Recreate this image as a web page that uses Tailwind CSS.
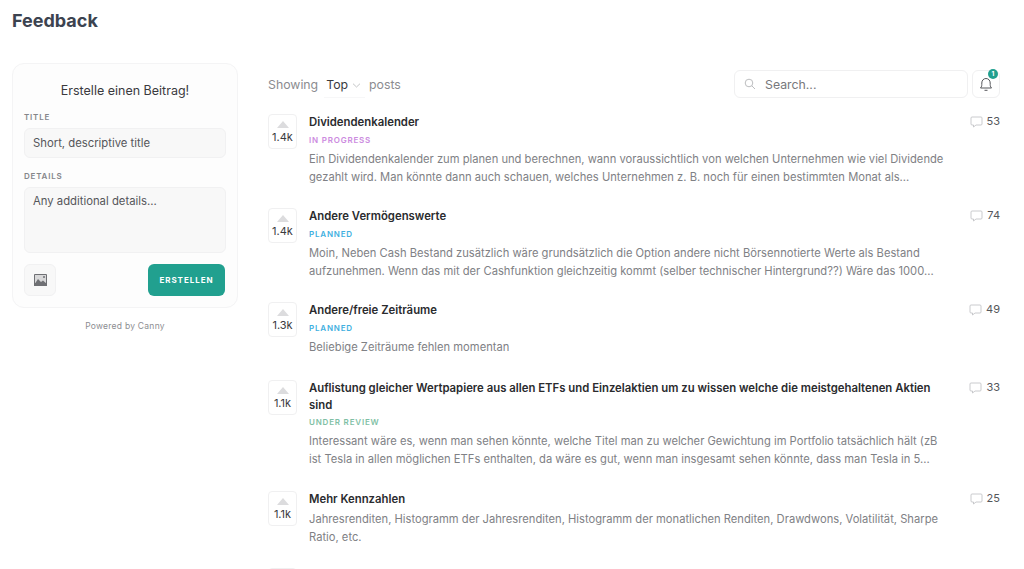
<!DOCTYPE html>
<html lang="en">
<head>
    <meta charset="UTF-8">
    <meta name="viewport" content="width=device-width, initial-scale=1.0">
    <title>Feedback</title>
    <script src="https://cdn.jsdelivr.net/npm/@tailwindcss/browser@4"></script>
</head>
<body class="bg-white h-[569px] overflow-hidden font-['Inter',sans-serif] text-[#2f3136]">
    <header class="px-3 pt-[9px] h-[63px]">
        <h1 class="text-[18px] leading-6 font-bold text-[#3c4350]">Feedback</h1>
    </header>

    <main class="flex items-start px-3 pr-6">
        <!-- sidebar -->
        <aside class="w-[226px] shrink-0">
            <form class="bg-[#fdfdfd] border border-[#f4f4f5] rounded-xl h-[245px] px-[11px] pt-[18px]">
                <h2 class="text-center text-[12.5px] leading-[17px] text-[#3a3a3e]">Erstelle einen Beitrag!</h2>
                <label class="block mt-[13px] text-[8px] leading-[10px] font-semibold tracking-[0.1em] text-[#85868a]">TITLE</label>
                <div class="mt-[6px] h-[30px] bg-[#f8f8f8] border border-[#f1f1f2] rounded-md px-[8px] text-[11.3px] leading-[28px] text-[#55565a]">Short, descriptive title</div>
                <label class="block mt-[13px] text-[8px] leading-[10px] font-semibold tracking-[0.1em] text-[#85868a]">DETAILS</label>
                <div class="mt-[6px] h-[66px] bg-[#f8f8f8] border border-[#f1f1f2] rounded-md px-[8px] pt-[3px] text-[11.3px] leading-[20px] text-[#55565a]">Any additional details...</div>
                <div class="flex justify-between mt-[11px]">
                    <div class="w-[32px] h-[32px] bg-[#f8f8f8] border border-[#f1f1f2] rounded-md flex items-center justify-center">
                        <svg width="13" height="12" viewBox="0 0 13 12"><rect width="13" height="12" rx="1" fill="#6f7074"/><rect x="1" y="1" width="11" height="8" fill="#d8d8d9"/><path d="M0 11 L4 5 L7 8 L9 6.5 L13 10 V12 H0 Z" fill="#6f7074"/><circle cx="10" cy="3" r="1" fill="#6f7074"/></svg>
                    </div>
                    <button type="button" class="mr-px w-[77px] h-[32px] bg-[#21a08f] rounded-md text-white text-[8px] font-bold tracking-[0.12em]">ERSTELLEN</button>
                </div>
            </form>
            <p class="mt-[12px] text-center text-[8.5px] leading-3 tracking-[0.03em] text-[#8c8d91]">Powered by Canny</p>
        </aside>

        <!-- posts -->
        <section class="ml-[30px] flex-1 min-w-0">
            <div class="flex items-center h-[28px] mt-[7px] text-[12.3px]">
                <span class="pt-[2px] text-[#8b8c90]">Showing</span>
                <div class="flex items-center h-[28px] ml-[6px] pl-[2px] pr-[4px] pt-[3px] border-b border-[#f7f7f8]">
                    <span class="text-[#3a3a3e]">Top</span>
                    <svg class="ml-[4px]" width="9" height="5" viewBox="0 0 9 5" fill="none"><path d="M1 0.7 L4.5 4 L8 0.7" stroke="#b5b6b9" stroke-width="0.8"/></svg>
                </div>
                <span class="ml-[4px] pt-[2px] text-[#8b8c90]">posts</span>
                <div class="ml-auto w-[234px] h-[28px] border border-[#f0f0f1] rounded-md flex items-center px-[9px]">
                    <svg width="12" height="12" viewBox="0 0 12 12" fill="none" stroke="#b4b5b8" stroke-width="0.9"><circle cx="5" cy="5" r="3.8"/><path d="M7.8 7.8 L11 11"/></svg>
                    <span class="ml-[9px] pt-[2px] text-[#77787c]">Search...</span>
                </div>
                <div class="relative ml-[4px] w-[28px] h-[28px] border border-[#f0f0f1] rounded-md flex items-center justify-center">
                    <svg width="14" height="15" viewBox="0 0 14 15" fill="none" stroke="#55565a" stroke-width="1"><path d="M1.5 11 C3 9.5 2.8 8 2.8 6 C2.8 3.4 4.6 1.5 7 1.5 C9.4 1.5 11.2 3.4 11.2 6 C11.2 8 11 9.5 12.5 11 Z"/><path d="M5.5 13.3 H8.5"/></svg>
                    <span class="absolute top-[-2px] right-[1px] w-[10px] h-[10px] rounded-full bg-[#21a08f] text-white text-[6.5px] leading-[10px] font-bold text-center">1</span>
                </div>
            </div>

            <div id="posts" class="mt-[16px]">
                <article class="flex items-start pb-[22px]">
                    <div class="w-[29px] h-[35px] shrink-0 border border-[#f0f0f1] rounded-[4px] flex flex-col items-center pt-[6px]">
                        <span class="w-0 h-0 border-x-[6px] border-x-transparent border-b-[7px] border-b-[#dcdcde]"></span>
                        <span class="mt-[3px] text-[11px] leading-[13px] text-[#3a3a3e]">1.4k</span>
                    </div>
                    <div class="ml-[12px] flex-1 min-w-0 pr-[24px]">
                        <h3 class="text-[11.35px] leading-[17px] font-semibold text-[#2a2b2e]">Dividendenkalender</h3>
                        <div class="mt-[4px] text-[8px] leading-[10px] font-semibold tracking-[0.1em] text-[#cc8be0]">IN PROGRESS</div>
                        <p class="mt-[6px] text-[11.2px] leading-[17.5px] text-[#808185]">Ein Dividendenkalender zum planen und berechnen, wann voraussichtlich von welchen Unternehmen wie viel Dividende gezahlt wird. Man könnte dann auch schauen, welches Unternehmen z. B. noch für einen bestimmten Monat als...</p>
                    </div>
                    <div class="flex items-center h-[15px] text-[11px] text-[#55565a]">
                        <svg width="13" height="12" viewBox="0 0 13 12" fill="none" stroke="#bdbec1" stroke-width="0.8"><path d="M2 1 H11 Q12 1 12 2 V8 Q12 9 11 9 H6 L3.5 11 V9 H2 Q1 9 1 8 V2 Q1 1 2 1 Z"/></svg>
                        <span class="ml-[4px]">53</span>
                    </div>
                </article>
                <article class="flex items-start pb-[22px]">
                    <div class="w-[29px] h-[35px] shrink-0 border border-[#f0f0f1] rounded-[4px] flex flex-col items-center pt-[6px]">
                        <span class="w-0 h-0 border-x-[6px] border-x-transparent border-b-[7px] border-b-[#dcdcde]"></span>
                        <span class="mt-[3px] text-[11px] leading-[13px] text-[#3a3a3e]">1.4k</span>
                    </div>
                    <div class="ml-[12px] flex-1 min-w-0 pr-[24px]">
                        <h3 class="text-[11.35px] leading-[17px] font-semibold text-[#2a2b2e]">Andere Vermögenswerte</h3>
                        <div class="mt-[4px] text-[8px] leading-[10px] font-semibold tracking-[0.1em] text-[#3fb0e0]">PLANNED</div>
                        <p class="mt-[6px] text-[11.2px] leading-[17.5px] text-[#808185]">Moin, Neben Cash Bestand zusätzlich wäre grundsätzlich die Option andere nicht Börsennotierte Werte als Bestand aufzunehmen. Wenn das mit der Cashfunktion gleichzeitig kommt (selber technischer Hintergrund??) Wäre das 1000...</p>
                    </div>
                    <div class="flex items-center h-[15px] text-[11px] text-[#55565a]">
                        <svg width="13" height="12" viewBox="0 0 13 12" fill="none" stroke="#bdbec1" stroke-width="0.8"><path d="M2 1 H11 Q12 1 12 2 V8 Q12 9 11 9 H6 L3.5 11 V9 H2 Q1 9 1 8 V2 Q1 1 2 1 Z"/></svg>
                        <span class="ml-[4px]">74</span>
                    </div>
                </article>
                <article class="flex items-start pb-[23.5px]">
                    <div class="w-[29px] h-[35px] shrink-0 border border-[#f0f0f1] rounded-[4px] flex flex-col items-center pt-[6px]">
                        <span class="w-0 h-0 border-x-[6px] border-x-transparent border-b-[7px] border-b-[#dcdcde]"></span>
                        <span class="mt-[3px] text-[11px] leading-[13px] text-[#3a3a3e]">1.3k</span>
                    </div>
                    <div class="ml-[12px] flex-1 min-w-0 pr-[24px]">
                        <h3 class="text-[11.35px] leading-[17px] font-semibold text-[#2a2b2e]">Andere/freie Zeiträume</h3>
                        <div class="mt-[4px] text-[8px] leading-[10px] font-semibold tracking-[0.1em] text-[#3fb0e0]">PLANNED</div>
                        <p class="mt-[6px] text-[11.2px] leading-[17.5px] text-[#808185]">Beliebige Zeiträume fehlen momentan</p>
                    </div>
                    <div class="flex items-center h-[15px] text-[11px] text-[#55565a]">
                        <svg width="13" height="12" viewBox="0 0 13 12" fill="none" stroke="#bdbec1" stroke-width="0.8"><path d="M2 1 H11 Q12 1 12 2 V8 Q12 9 11 9 H6 L3.5 11 V9 H2 Q1 9 1 8 V2 Q1 1 2 1 Z"/></svg>
                        <span class="ml-[4px]">49</span>
                    </div>
                </article>
                <article class="flex items-start pb-[23px]">
                    <div class="w-[29px] h-[35px] shrink-0 border border-[#f0f0f1] rounded-[4px] flex flex-col items-center pt-[6px]">
                        <span class="w-0 h-0 border-x-[6px] border-x-transparent border-b-[7px] border-b-[#dcdcde]"></span>
                        <span class="mt-[3px] text-[11px] leading-[13px] text-[#3a3a3e]">1.1k</span>
                    </div>
                    <div class="ml-[12px] flex-1 min-w-0 pr-[24px]">
                        <h3 class="text-[11.35px] leading-[17px] font-semibold text-[#2a2b2e]">Auflistung gleicher Wertpapiere aus allen ETFs und Einzelaktien um zu wissen welche die meistgehaltenen Aktien sind</h3>
                        <div class="mt-[3px] text-[8px] leading-[10px] font-semibold tracking-[0.1em] text-[#7fbfa5]">UNDER REVIEW</div>
                        <p class="mt-[6px] text-[11.2px] leading-[17.5px] text-[#808185]">Interessant wäre es, wenn man sehen könnte, welche Titel man zu welcher Gewichtung im Portfolio tatsächlich hält (zB ist Tesla in allen möglichen ETFs enthalten, da wäre es gut, wenn man insgesamt sehen könnte, dass man Tesla in 5...</p>
                    </div>
                    <div class="flex items-center h-[15px] text-[11px] text-[#55565a]">
                        <svg width="13" height="12" viewBox="0 0 13 12" fill="none" stroke="#bdbec1" stroke-width="0.8"><path d="M2 1 H11 Q12 1 12 2 V8 Q12 9 11 9 H6 L3.5 11 V9 H2 Q1 9 1 8 V2 Q1 1 2 1 Z"/></svg>
                        <span class="ml-[4px]">33</span>
                    </div>
                </article>
                <article class="flex items-start pb-[22px]">
                    <div class="w-[29px] h-[35px] shrink-0 border border-[#f0f0f1] rounded-[4px] flex flex-col items-center pt-[6px]">
                        <span class="w-0 h-0 border-x-[6px] border-x-transparent border-b-[7px] border-b-[#dcdcde]"></span>
                        <span class="mt-[3px] text-[11px] leading-[13px] text-[#3a3a3e]">1.1k</span>
                    </div>
                    <div class="ml-[12px] flex-1 min-w-0 pr-[24px]">
                        <h3 class="text-[11.35px] leading-[17px] font-semibold text-[#2a2b2e]">Mehr Kennzahlen</h3>
                        <p class="mt-[3px] text-[11.2px] leading-[17.5px] text-[#808185]">Jahresrenditen, Histogramm der Jahresrenditen, Histogramm der monatlichen Renditen, Drawdwons, Volatilität, Sharpe Ratio, etc.</p>
                    </div>
                    <div class="flex items-center h-[15px] text-[11px] text-[#55565a]">
                        <svg width="13" height="12" viewBox="0 0 13 12" fill="none" stroke="#bdbec1" stroke-width="0.8"><path d="M2 1 H11 Q12 1 12 2 V8 Q12 9 11 9 H6 L3.5 11 V9 H2 Q1 9 1 8 V2 Q1 1 2 1 Z"/></svg>
                        <span class="ml-[4px]">25</span>
                    </div>
                </article>
                <article class="flex items-start">
                    <div class="w-[29px] h-[35px] shrink-0 border border-[#f0f0f1] rounded-[4px]"></div>
                </article>
            </div>
        </section>
    </main>
</body>
</html>
